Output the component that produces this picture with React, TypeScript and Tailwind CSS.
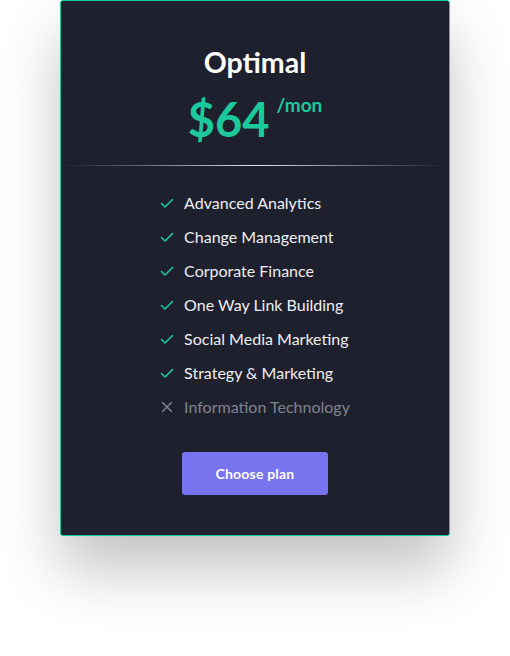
const FEATURES = [
  { label: "Advanced Analytics", ok: true },
  { label: "Change Management", ok: true },
  { label: "Corporate Finance", ok: true },
  { label: "One Way Link Building", ok: true },
  { label: "Social Media Marketing", ok: true },
  { label: "Strategy & Marketing", ok: true },
  { label: "Information Technology", ok: false },
];

function Check() {
  return (
    <svg width="14" height="14" viewBox="0 0 14 14" fill="none" className="shrink-0">
      <polyline points="1.5,7.5 5,11 12.5,3.5" stroke="#1cc99c" strokeWidth="1.6" strokeLinecap="round" strokeLinejoin="round" />
    </svg>
  );
}

function Cross() {
  return (
    <svg width="14" height="14" viewBox="0 0 14 14" fill="none" className="shrink-0">
      <path d="M2.5 2.5 L11.5 11.5 M11.5 2.5 L2.5 11.5" stroke="#7d808c" strokeWidth="1.5" strokeLinecap="round" />
    </svg>
  );
}

export default function App() {
  return (
    <div className="min-h-[656px] bg-white" style={{ fontFamily: "Lato, 'Open Sans', sans-serif" }}>
      <div className="mx-auto w-[390px] rounded-[3px] border border-[#18c99b] bg-[#1f202d] shadow-[0_34px_60px_rgba(0,0,0,0.24)]">
        <div className="pt-[44px] text-center">
          <h2 className="text-[28.5px] font-bold leading-[34px] text-white">Optimal</h2>
          <div className="mt-[14px] flex justify-center">
            <span className="text-[47px] font-bold leading-[52px] text-[#1cc99c]">$64</span>
            <span className="ml-[7px] mt-[1px] text-[19px] font-bold leading-[22px] text-[#1cc99c]">/mon</span>
          </div>
        </div>
        <div className="mt-[20px] h-px bg-gradient-to-r from-[#1f202d] via-[#e4e5ea] to-[#1f202d]" />
        <ul className="mx-auto mt-[20px] w-fit">
          {FEATURES.map((f) => (
            <li key={f.label} className="flex h-[34px] items-center gap-[10px] text-[16px]">
              {f.ok ? <Check /> : <Cross />}
              <span className={f.ok ? "text-[#eceef2]" : "text-[#80838f]"}>{f.label}</span>
            </li>
          ))}
        </ul>
        <div className="flex justify-center pb-[40px] pt-[28px]">
          <button className="h-[43px] w-[146px] rounded-[3px] bg-[#7874f0] text-[14px] font-bold tracking-[0.2px] text-white">
            Choose plan
          </button>
        </div>
      </div>
    </div>
  );
}
